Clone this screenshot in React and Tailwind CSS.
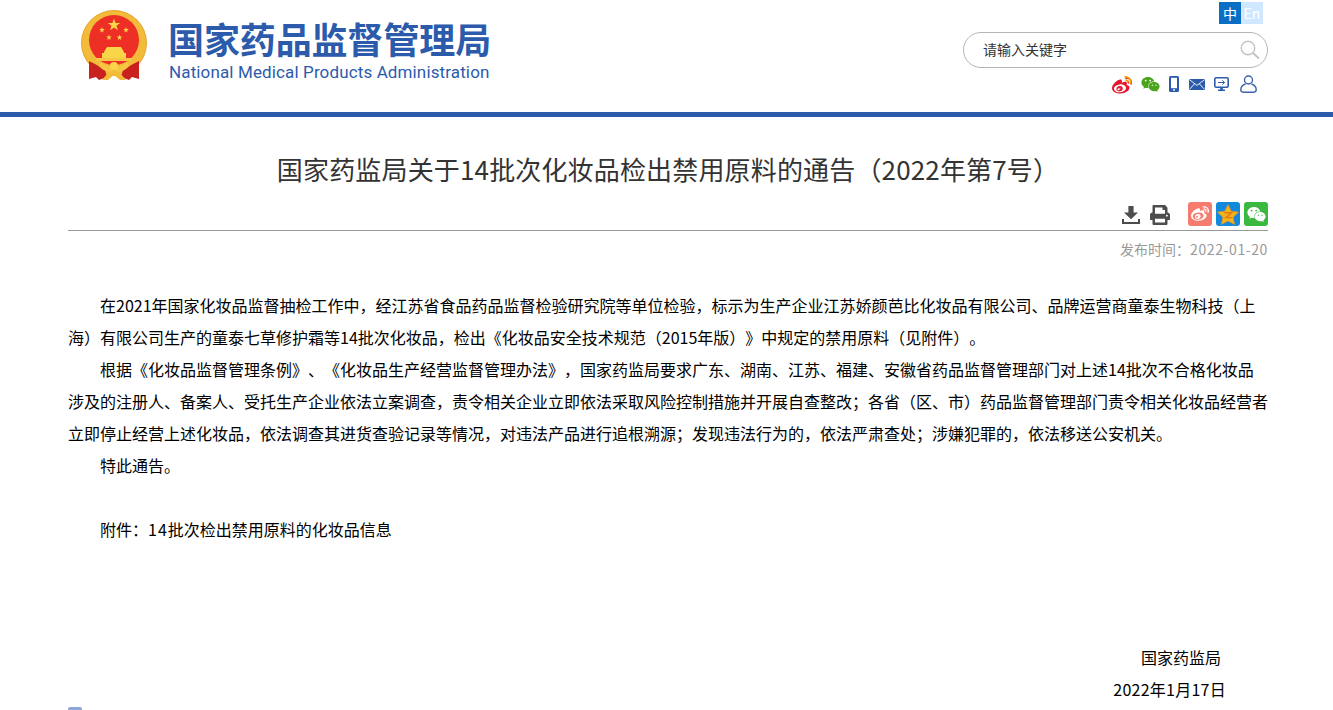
import React from 'react';
import { FaWeibo, FaWeixin, FaPrint } from 'react-icons/fa';

const cjk = { fontFamily: '"Noto Sans CJK SC", "Liberation Sans", sans-serif' };

// 国徽
const Emblem = () => {
  const star = (cx, cy, r, rot = 0) => {
    const pts = [];
    for (let i = 0; i < 10; i++) {
      const rad = i % 2 === 0 ? r : r * 0.4;
      const a = (Math.PI / 5) * i - Math.PI / 2 + rot;
      pts.push(`${(cx + rad * Math.cos(a)).toFixed(2)},${(cy + rad * Math.sin(a)).toFixed(2)}`);
    }
    return <polygon key={`${cx}-${cy}`} points={pts.join(' ')} fill="#f9d648" />;
  };
  return (
    <svg width="66" height="70" viewBox="0 0 66 70" className="shrink-0">
      <circle cx="33" cy="33" r="32.5" fill="#f2bb3a" stroke="#e5a52c" strokeWidth="1" />
      <circle cx="33" cy="30" r="25" fill="#ee2f25" />
      {star(33, 15, 6.5)}
      {star(21, 20, 3)}
      {star(45, 20, 3)}
      {star(28, 27.5, 3)}
      {star(38.5, 27.5, 3)}
      <path d="M23 42 L26 37 L40 37 L43 42 L43 43 L45 43 L45 48 L21 48 L21 43 L23 43 Z" fill="#f9d648" />
      <rect x="15" y="48" width="36" height="3" fill="#f6c644" />
      <path d="M8 51 L14 54 L24 60 L26 67 L18 70 L15 67 L8 69 Z" fill="#c9211e" />
      <path d="M58 51 L52 54 L42 60 L40 67 L48 70 L51 67 L58 69 Z" fill="#c9211e" />
      <path d="M20 52 C24 56 29 57 33 57 C37 57 42 56 46 52 L48 56 C43 62 38 62 33 62 C28 62 23 62 18 56 Z" fill="#f6c644" />
      <circle cx="33" cy="56" r="4" fill="#f9d648" />
      <path d="M21 70 L27 63 L33 60 L39 63 L45 70 L39 70 L33 65 L27 70 Z" fill="#f2bb3a" />
    </svg>
  );
};

const SearchIcon = () => (
  <svg width="20" height="20" viewBox="0 0 20 20" fill="none" stroke="#c4c4c4">
    <circle cx="8" cy="8" r="6.8" strokeWidth="1.4" />
    <path d="M13 13 L19 18.6" strokeWidth="2" />
  </svg>
);

const SinaIcon = () => (
  <div className="relative w-[20px] h-[16px]">
    <FaWeibo className="absolute left-0 top-0 text-[#e6162d]" size={20} />
    <svg width="20" height="16" viewBox="0 0 20 16" className="absolute left-0 top-0" fill="none" stroke="#f2a100" strokeWidth="1.6">
      <path d="M12.5 1 C16 0.2 19.5 3 18.7 7.5" />
      <path d="M13.5 4.2 C15 3.8 16.2 5 15.8 6.8" />
    </svg>
  </div>
);

const PhoneIcon = () => (
  <svg width="10" height="16" viewBox="0 0 10 16">
    <rect x="0" y="0" width="10" height="16" rx="1.6" fill="#2c5bab" />
    <rect x="2" y="1.8" width="6" height="10.4" fill="#fff" />
    <circle cx="5" cy="14" r="0.9" fill="#fff" />
  </svg>
);

const MailIcon = () => (
  <svg width="16" height="11" viewBox="0 0 16 11">
    <rect width="16" height="11" rx="0.6" fill="#2c5bab" />
    <path d="M0.4 0.6 L8 6.4 L15.6 0.6 M0.4 10.4 L5.6 4.8 M15.6 10.4 L10.4 4.8" stroke="#fff" strokeWidth="0.9" fill="none" />
  </svg>
);

const ScreenIcon = () => (
  <svg width="15" height="14" viewBox="0 0 15 14">
    <rect x="0.8" y="0.8" width="13.4" height="9.4" rx="1.4" fill="none" stroke="#2c5bab" strokeWidth="1.6" />
    <path d="M4 5.5 H10.4 M8.4 3.4 L10.6 5.5 L8.4 7.6" stroke="#2c5bab" strokeWidth="1" fill="none" />
    <path d="M6.2 10.5 H8.8 V12.4 H11 V14 H4 V12.4 H6.2 Z" fill="#2c5bab" />
  </svg>
);

const UserIcon = () => (
  <svg width="17" height="18" viewBox="0 0 17 18" fill="none" stroke="#3f62ac" strokeWidth="1.4">
    <circle cx="8.5" cy="5" r="4" />
    <path d="M5.5 9 C2.5 10 0.8 12.2 0.8 14.6 C0.8 16.2 1.8 17.2 3.2 17.2 H13.8 C15.2 17.2 16.2 16.2 16.2 14.6 C16.2 12.2 14.5 10 11.5 9" />
  </svg>
);

const DownloadIcon = () => (
  <svg width="18" height="18" viewBox="0 0 18 18" fill="#4d4d4d">
    <path d="M6.4 0 H11.6 V6.6 H16 L9 13.2 L2 6.6 H6.4 Z" />
    <path d="M0 13 H2 V16 H16 V13 H18 V18 H0 Z" />
  </svg>
);

const QzoneIcon = () => (
  <div className="w-[24px] h-[24px] rounded-[3px] bg-[#1289dc] flex items-center justify-center">
    <svg width="22" height="21" viewBox="0 0 22 21">
      <polygon points="11,0.5 14.2,7.2 21.6,8.1 16.2,13.2 17.6,20.5 11,16.9 4.4,20.5 5.8,13.2 0.4,8.1 7.8,7.2" fill="#f6b21c" stroke="#e8901a" strokeWidth="0.6" />
      <path d="M7.5 8.8 H14.5 L9 13.6 H14.8" stroke="#e07a10" strokeWidth="1.4" fill="none" />
    </svg>
  </div>
);

const paragraphs = [
  '在2021年国家化妆品监督抽检工作中，经江苏省食品药品监督检验研究院等单位检验，标示为生产企业江苏娇颜芭比化妆品有限公司、品牌运营商童泰生物科技（上海）有限公司生产的童泰七草修护霜等14批次化妆品，检出《化妆品安全技术规范（2015年版）》中规定的禁用原料（见附件）。',
  '根据《化妆品监督管理条例》、《化妆品生产经营监督管理办法》，国家药监局要求广东、湖南、江苏、福建、安徽省药品监督管理部门对上述14批次不合格化妆品涉及的注册人、备案人、受托生产企业依法立案调查，责令相关企业立即依法采取风险控制措施并开展自查整改；各省（区、市）药品监督管理部门责令相关化妆品经营者立即停止经营上述化妆品，依法调查其进货查验记录等情况，对违法产品进行追根溯源；发现违法行为的，依法严肃查处；涉嫌犯罪的，依法移送公安机关。',
  '特此通告。',
];

const App = () => {
  return (
    <div className="h-[710px] overflow-hidden bg-white text-black [text-spacing-trim:space-all]" style={cjk}>
      {/* 头部 */}
      <header className="h-[117px] border-b-[5px] border-[#2c5bab]">
        <div className="w-[1200px] ml-[68px] flex justify-between">
          <div className="flex pl-[13px] pt-[10px] gap-[21px]">
            <Emblem />
            <div className="pt-[4px]">
              <div className="text-[36px] leading-[48px] font-bold text-[#2c5bab] tracking-[-0.1px]">国家药品监督管理局</div>
              <div className="text-[17px] leading-[20px] ml-[1px] text-[#2c5bab] whitespace-nowrap tracking-[0.13px]" style={{ fontFamily: 'Roboto, "Liberation Sans", sans-serif' }}>National Medical Products Administration</div>
            </div>
          </div>
          <div className="w-[305px] flex flex-col items-end">
            <div className="flex mt-[2px] mr-[5px] text-[14px] leading-[22px] text-center text-white">
              <span className="w-[22px] h-[22px] bg-[#0a6fc2]">中</span>
              <span className="w-[22px] h-[22px] bg-[#cfe8ff]">En</span>
            </div>
            <div className="mt-[8px] w-[305px] h-[36px] rounded-[18px] border border-[#b5b5b5] flex items-center justify-between pl-[19px] pr-[7px]">
              <span className="text-[14px] leading-[20px] text-[#333] -mt-[2px]">请输入关键字</span>
              <SearchIcon />
            </div>
            <div className="mt-[7px] mr-[11px] h-[18px] flex items-center gap-[9px]">
              <SinaIcon />
              <FaWeixin className="text-[#4aa51c]" size={19} />
              <PhoneIcon />
              <div className="ml-[1px]"><MailIcon /></div>
              <ScreenIcon />
              <div className="ml-[2px]"><UserIcon /></div>
            </div>
          </div>
        </div>
      </header>

      <main className="w-[1200px] ml-[68px]">
        {/* 标题 */}
        <h1 className="text-[26px] leading-[36px] mt-[34px] text-center text-[#333] font-normal whitespace-nowrap tracking-[0.16px]">国家药监局关于14批次化妆品检出禁用原料的通告（2022年第7号）</h1>

        {/* 工具栏 */}
        <div className="mt-[14px] h-[30px] border-b border-[#999] flex justify-end items-start">
          <div className="flex items-center gap-[10px] mt-[4px]">
            <DownloadIcon />
            <FaPrint className="text-[#4d4d4d]" size={20} />
          </div>
          <div className="flex gap-[4px] ml-[18px] mt-[1px]">
            <div className="w-[24px] h-[24px] rounded-[3px] bg-[#f67c6f] flex items-center justify-center">
              <FaWeibo className="text-white" size={18} />
            </div>
            <QzoneIcon />
            <div className="w-[24px] h-[24px] rounded-[3px] bg-[#3bb83f] flex items-center justify-center">
              <FaWeixin className="text-white" size={19} />
            </div>
          </div>
        </div>
        <div className="mt-[8px] text-right text-[14px] leading-[20px] text-[#999]">
          发布时间：<span className="tracking-[0.6px]">2022-01-20</span>
        </div>

        {/* 正文 */}
        <div className="mt-[30px] text-[16px] leading-[32px]">
          {paragraphs.map((p) => (
            <p key={p.slice(0, 8)} className="indent-[32px]">{p}</p>
          ))}
          <p className="h-[32px]"></p>
          <p className="indent-[32px]">附件：<span className="tracking-[1px]">14</span>批次检出禁用原料的化妆品信息</p>
          <div className="h-[96px]"></div>
          <p className="text-right pr-[47px]">国家药监局</p>
          <p className="text-right pr-[42px] tracking-[0.25px]">2022年1月17日</p>
          <div className="mt-[2px] w-[14px] h-[14px] bg-[#8ea6d8] rounded-t-[2px]"></div>
        </div>
      </main>
    </div>
  );
};

export default App;
